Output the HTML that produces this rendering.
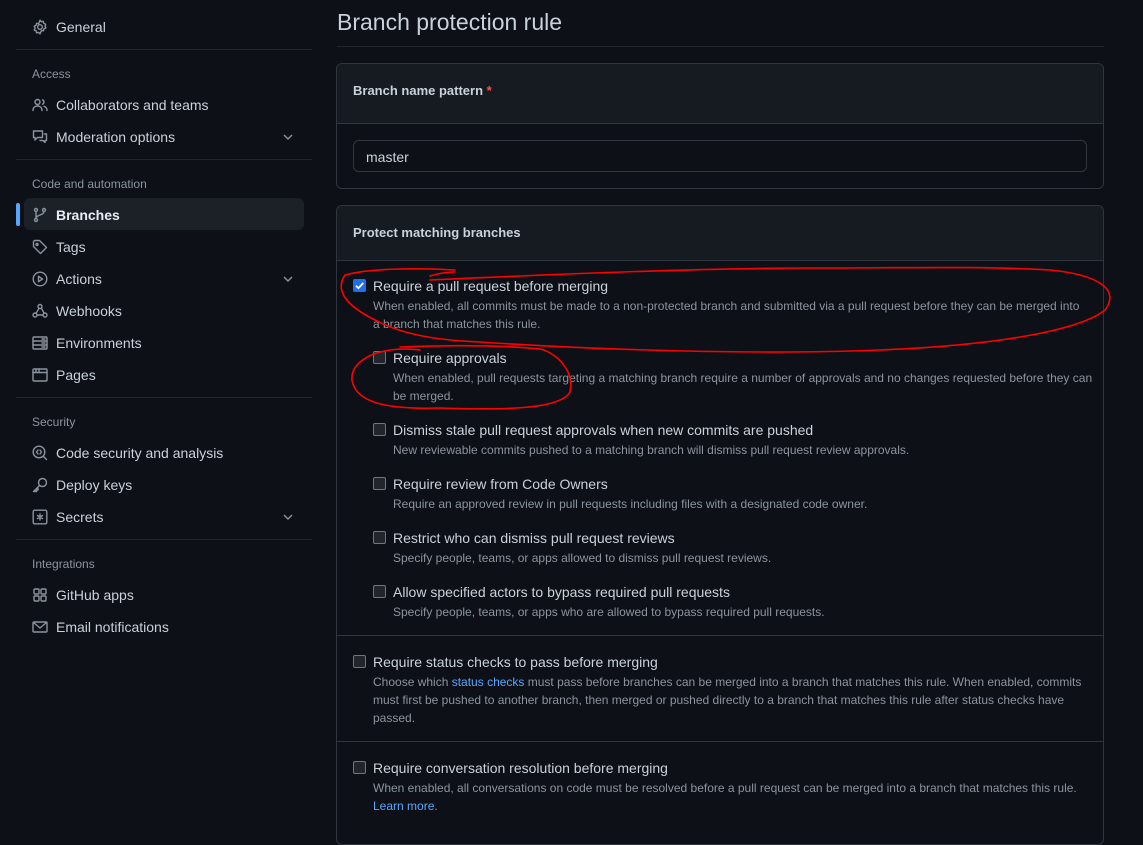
<!DOCTYPE html>
<html><head><meta charset="utf-8"><style>
*{margin:0;padding:0;box-sizing:border-box}
body{width:1143px;height:826px;background:#0d1117;font-family:"Liberation Sans",sans-serif;color:#c9d1d9;position:relative;overflow:hidden}
.a{position:absolute;white-space:nowrap}
.nav{font-size:14px;line-height:20px;left:56px}
.sec{font-size:12px;line-height:16px;left:32px;color:#8b949e}
.hr{position:absolute;height:1px;background:#21262d}
.ic{position:absolute;left:32px;width:16px;height:16px}
.ic *{fill:none;stroke:#8b949e;stroke-width:1.4;stroke-linecap:round;stroke-linejoin:round}
.chev{position:absolute;left:282px;width:12px;height:12px}
.t{font-size:14px;line-height:20px;color:#c9d1d9}
.d{font-size:12px;line-height:18px;color:#8b949e}
.cb{position:absolute;width:13px;height:13px;border:1px solid #6e7681;border-radius:2px;background:#21262d}
.box{position:absolute;left:336px;width:768px;border:1px solid #30363d;border-radius:6px}
a{color:#58a6ff;text-decoration:none}
</style></head><body>

<!-- sidebar -->
<svg class="ic" style="top:19px" viewBox="0 0 16 16"><circle cx="8" cy="8" r="2.3"/><path d="M8 1.2l1.3 1.6 2-.5.5 2 1.9.9-.7 1.9.9 1.9-1.9.8-.5 2-2-.4L8 14.8l-1.4-1.4-2 .4-.5-2-1.9-.8.9-1.9-.9-1.9 1.9-.9.5-2 2 .5z"/></svg>
<div class="a nav" style="top:17px">General</div>
<div class="hr" style="left:16px;width:296px;top:49px"></div>
<div class="a sec" style="top:66px">Access</div>
<svg class="ic" style="top:97px" viewBox="0 0 16 16"><circle cx="5.5" cy="5" r="2.5"/><path d="M1 13.5c0-3 2-4.5 4.5-4.5S10 10.5 10 13.5M10.5 2.8a2.4 2.4 0 010 4.4M12 9.3c1.8.6 3 2 3 4.2"/></svg>
<div class="a nav" style="top:95px">Collaborators and teams</div>
<svg class="ic" style="top:129px" viewBox="0 0 16 16"><path d="M1.5 2h9v6.5h-5l-2.5 2.5V8.5h-1.5zM12.5 5h2v6.5h-1.5v2l-2-2H8"/></svg>
<div class="a nav" style="top:127px">Moderation options</div>
<svg class="chev" style="top:131px" viewBox="0 0 12 12"><path d="M2 4l4 4 4-4" fill="none" stroke="#8b949e" stroke-width="1.4"/></svg>
<div class="hr" style="left:16px;width:296px;top:159px"></div>
<div class="a sec" style="top:176px">Code and automation</div>
<div style="position:absolute;left:24px;top:198px;width:280px;height:32px;background:#1c2128;border-radius:6px"></div>
<div style="position:absolute;left:16px;top:203px;width:4px;height:23px;background:#58a6ff;border-radius:3px"></div>
<svg class="ic" style="top:207px" viewBox="0 0 16 16"><circle cx="4" cy="3" r="1.5"/><circle cx="4" cy="13" r="1.5"/><circle cx="12" cy="3" r="1.5"/><path d="M4 4.5v7M12 4.5c0 4-8 3-8 7"/></svg>
<div class="a nav" style="top:205px;color:#e6edf3;font-weight:bold">Branches</div>
<svg class="ic" style="top:239px" viewBox="0 0 16 16"><path d="M1.5 2.5v5l7 7 6-6-7-7h-5z"/><circle cx="5" cy="5.5" r="1"/></svg>
<div class="a nav" style="top:237px">Tags</div>
<svg class="ic" style="top:271px" viewBox="0 0 16 16"><circle cx="8" cy="8" r="6.8"/><path d="M6.5 5.3v5.4L10.5 8z"/></svg>
<div class="a nav" style="top:269px">Actions</div>
<svg class="chev" style="top:273px" viewBox="0 0 12 12"><path d="M2 4l4 4 4-4" fill="none" stroke="#8b949e" stroke-width="1.4"/></svg>
<svg class="ic" style="top:303px" viewBox="0 0 16 16"><circle cx="8" cy="3.5" r="2"/><circle cx="3" cy="12" r="2"/><circle cx="13" cy="12" r="2"/><path d="M7 5.3L4 10.3M5 12h6M9.5 5.5l2.5 4.6"/></svg>
<div class="a nav" style="top:301px">Webhooks</div>
<svg class="ic" style="top:335px" viewBox="0 0 16 16"><rect x="1" y="2" width="14" height="12" rx="1"/><path d="M1 6h14M1 10h14M10 4h3M10 8h3M10 12h3"/></svg>
<div class="a nav" style="top:333px">Environments</div>
<svg class="ic" style="top:367px" viewBox="0 0 16 16"><rect x="1" y="2" width="14" height="12" rx="1"/><path d="M1 5.5h14M4 2v3.5M7 2v3.5"/></svg>
<div class="a nav" style="top:365px">Pages</div>
<div class="hr" style="left:16px;width:296px;top:397px"></div>
<div class="a sec" style="top:414px">Security</div>
<svg class="ic" style="top:445px" viewBox="0 0 16 16"><circle cx="7" cy="7" r="5.8"/><path d="M11.2 11.2l3.3 3.3M6 5L4.5 7 6 9M8 5l1.5 2L8 9"/></svg>
<div class="a nav" style="top:443px">Code security and analysis</div>
<svg class="ic" style="top:477px" viewBox="0 0 16 16"><circle cx="10.5" cy="5.5" r="4"/><path d="M7.5 8.5L1.5 14.5h3v-1.5h1.5v-1.5"/></svg>
<div class="a nav" style="top:475px">Deploy keys</div>
<svg class="ic" style="top:509px" viewBox="0 0 16 16"><rect x="1.2" y="1.2" width="13.6" height="13.6" rx="1.5"/><path d="M8 5v6M5.5 6.5l5 3M10.5 6.5l-5 3"/></svg>
<div class="a nav" style="top:507px">Secrets</div>
<svg class="chev" style="top:511px" viewBox="0 0 12 12"><path d="M2 4l4 4 4-4" fill="none" stroke="#8b949e" stroke-width="1.4"/></svg>
<div class="hr" style="left:16px;width:296px;top:539px"></div>
<div class="a sec" style="top:556px">Integrations</div>
<svg class="ic" style="top:587px" viewBox="0 0 16 16"><rect x="2" y="2" width="5" height="5" rx="1"/><rect x="9" y="2" width="5" height="5" rx="1"/><rect x="2" y="9" width="5" height="5" rx="1"/><rect x="9" y="9" width="5" height="5" rx="1"/></svg>
<div class="a nav" style="top:585px">GitHub apps</div>
<svg class="ic" style="top:619px" viewBox="0 0 16 16"><rect x="1" y="3" width="14" height="10" rx="1"/><path d="M1.5 3.5L8 9l6.5-5.5"/></svg>
<div class="a nav" style="top:617px">Email notifications</div>

<!-- main -->
<div class="a" style="left:337px;top:7px;font-size:23px;line-height:30px;color:#c9d1d9">Branch protection rule</div>
<div class="hr" style="left:337px;width:767px;top:46px"></div>

<div class="box" style="top:63px;height:126px">
  <div style="height:60px;background:#161b22;border-bottom:1px solid #30363d;border-radius:6px 6px 0 0"></div>
</div>
<div class="a t" style="left:353px;top:81px;font-weight:bold;font-size:13px">Branch name pattern <span style="color:#f85149">*</span></div>
<div style="position:absolute;left:353px;top:140px;width:734px;height:32px;border:1px solid #30363d;border-radius:6px;background:#0d1117"></div>
<div class="a t" style="left:366px;top:147px">master</div>

<div class="box" style="top:205px;height:640px">
  <div style="height:55px;background:#161b22;border-bottom:1px solid #30363d;border-radius:6px 6px 0 0"></div>
</div>
<div class="a t" style="left:353px;top:223px;font-weight:bold;font-size:13px">Protect matching branches</div>

<div class="cb" style="left:353px;top:279px;background:#1f6feb;border-color:#1f6feb"></div>
<svg style="position:absolute;left:353px;top:279px" width="13" height="13" viewBox="0 0 13 13"><path d="M3 6.8l2.4 2.4L10.2 4" fill="none" stroke="#fff" stroke-width="1.8"/></svg>
<div class="a t" style="left:373px;top:276px">Require a pull request before merging</div>
<div class="a d" style="left:373px;top:297px">When enabled, all commits must be made to a non-protected branch and submitted via a pull request before they can be merged into<br>a branch that matches this rule.</div>

<div class="cb" style="left:373px;top:351px"></div>
<div class="a t" style="left:393px;top:348px">Require approvals</div>
<div class="a d" style="left:393px;top:369px">When enabled, pull requests targeting a matching branch require a number of approvals and no changes requested before they can<br>be merged.</div>

<div class="cb" style="left:373px;top:423px"></div>
<div class="a t" style="left:393px;top:420px">Dismiss stale pull request approvals when new commits are pushed</div>
<div class="a d" style="left:393px;top:441px">New reviewable commits pushed to a matching branch will dismiss pull request review approvals.</div>

<div class="cb" style="left:373px;top:477px"></div>
<div class="a t" style="left:393px;top:474px">Require review from Code Owners</div>
<div class="a d" style="left:393px;top:495px">Require an approved review in pull requests including files with a designated code owner.</div>

<div class="cb" style="left:373px;top:531px"></div>
<div class="a t" style="left:393px;top:528px">Restrict who can dismiss pull request reviews</div>
<div class="a d" style="left:393px;top:549px">Specify people, teams, or apps allowed to dismiss pull request reviews.</div>

<div class="cb" style="left:373px;top:585px"></div>
<div class="a t" style="left:393px;top:582px">Allow specified actors to bypass required pull requests</div>
<div class="a d" style="left:393px;top:603px">Specify people, teams, or apps who are allowed to bypass required pull requests.</div>

<div class="hr" style="left:337px;width:766px;top:635px;background:#30363d"></div>
<div class="cb" style="left:353px;top:655px"></div>
<div class="a t" style="left:373px;top:652px">Require status checks to pass before merging</div>
<div class="a d" style="left:373px;top:673px">Choose which <a>status checks</a> must pass before branches can be merged into a branch that matches this rule. When enabled, commits<br>must first be pushed to another branch, then merged or pushed directly to a branch that matches this rule after status checks have<br>passed.</div>

<div class="hr" style="left:337px;width:766px;top:741px;background:#30363d"></div>
<div class="cb" style="left:353px;top:761px"></div>
<div class="a t" style="left:373px;top:758px">Require conversation resolution before merging</div>
<div class="a d" style="left:373px;top:779px">When enabled, all conversations on code must be resolved before a pull request can be merged into a branch that matches this rule.<br><a>Learn more</a>.</div>

<!-- red annotations -->
<svg style="position:absolute;left:0;top:0" width="1143" height="826" viewBox="0 0 1143 826">
<g fill="none" stroke="#ff0000" stroke-width="1.6" stroke-linecap="round">
<path d="M455 270C420 268 370 268 345 275C335 290 345 305 375 320C400 333 430 340 480 342C600 350 760 355 880 350C1000 345 1080 330 1105 310C1120 290 1100 275 1050 270C980 266 900 268 820 268C700 268 560 274 430 280"/>
<path d="M430 276C440 273 450 272 455 272"/>
<path d="M420 350C380 345 350 360 352 380C355 400 380 410 440 408C500 410 560 410 570 392C575 370 555 352 540 349C500 345 450 345 400 347"/>
</g></svg>
</body></html>
